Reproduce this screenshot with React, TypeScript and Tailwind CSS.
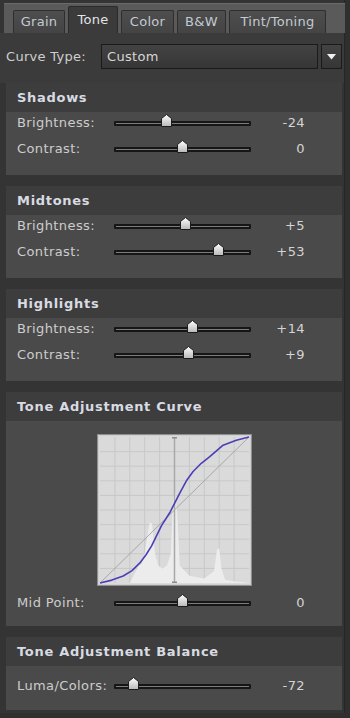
import React from 'react';

type Row = { label: string; value: number };
type Section = { title: string; rows: Row[] };

const SECTIONS: Section[] = [
  { title: 'Shadows', rows: [{ label: 'Brightness:', value: -24 }, { label: 'Contrast:', value: 0 }] },
  { title: 'Midtones', rows: [{ label: 'Brightness:', value: 5 }, { label: 'Contrast:', value: 53 }] },
  { title: 'Highlights', rows: [{ label: 'Brightness:', value: 14 }, { label: 'Contrast:', value: 9 }] },
];

const TABS = [
  { label: 'Grain', w: 'w-[52px]' },
  { label: 'Tone', w: 'w-[50px]', active: true },
  { label: 'Color', w: 'w-[53px]' },
  { label: 'B&W', w: 'w-[49px]' },
  { label: 'Tint/Toning', w: 'w-[97px]' },
];

const fmt = (v: number) => (v > 0 ? `+${v}` : `${v}`);

function Thumb() {
  return (
    <svg width="11" height="13" viewBox="0 0 11 13">
      <defs>
        <linearGradient id="thumbG" x1="0" y1="0" x2="0" y2="1">
          <stop offset="0" stopColor="#ffffff" />
          <stop offset="1" stopColor="#b8b8b8" />
        </linearGradient>
      </defs>
      <path d="M5.5 0.5 L10.5 4.5 L10.5 12.5 L0.5 12.5 L0.5 4.5 Z" fill="url(#thumbG)" stroke="#1c1c1c" strokeWidth="1" />
    </svg>
  );
}

function Slider({ value }: { value: number }) {
  const pct = (value + 100) / 200;
  return (
    <div className="relative w-[137px] h-[5px] shrink-0 rounded-[1px] bg-[#161616] flex items-center">
      <div className="w-full h-[1px] bg-[#7c7c7c] mx-[2px]" />
      <div className="absolute top-[-7px]" style={{ left: pct * 137 - 5.5 }}>
        <Thumb />
      </div>
    </div>
  );
}

function SliderRow({ label, value }: Row) {
  return (
    <div className="flex items-center h-[22px]">
      <span className="w-[97px] shrink-0 text-[13px] tracking-[0.4px] text-[#cdcdcd] whitespace-nowrap">{label}</span>
      <Slider value={value} />
      <span className="w-[54px] text-right text-[13px] tracking-[0.4px] text-[#d4d4d4]">{fmt(value)}</span>
    </div>
  );
}

function Header({ title }: { title: string }) {
  return (
    <div className="h-[29px] bg-[#3d3d3d] flex items-center pl-[11px] text-[13px] font-bold text-[#d8dbe2] tracking-[0.7px]">
      {title}
    </div>
  );
}

// points of the tone curve as fractions of the plot area
const CURVE: [number, number][] = [
  [0.0, 1.0], [0.08, 0.98], [0.156, 0.952], [0.215, 0.915], [0.268, 0.862], [0.31, 0.805], [0.346, 0.745],
  [0.413, 0.607], [0.469, 0.517], [0.536, 0.382], [0.58, 0.3], [0.625, 0.236], [0.68, 0.18],
  [0.737, 0.135], [0.826, 0.056], [0.915, 0.022], [1.0, 0.0],
];

const HIST: [number, number][] = [
  [0.0, 1.0], [0.2, 1.0], [0.23, 0.94], [0.26, 0.88], [0.28, 0.87], [0.3, 0.8], [0.32, 0.66], [0.335, 0.58],
  [0.35, 0.6], [0.37, 0.8], [0.39, 0.88], [0.42, 0.9], [0.45, 0.88], [0.475, 0.8], [0.49, 0.42], [0.505, 0.37],
  [0.52, 0.55], [0.535, 0.88], [0.6, 0.95], [0.7, 0.97], [0.765, 0.92], [0.785, 0.77], [0.8, 0.76], [0.815, 0.9],
  [0.84, 0.98], [1.0, 1.0],
];

function CurveGraph() {
  const x0 = 3, y0 = 3, w = 149, h = 146;
  const pt = ([fx, fy]: [number, number]) => `${(x0 + fx * w).toFixed(1)},${(y0 + fy * h).toFixed(1)}`;
  const lines = [];
  for (let i = 1; i < 10; i++) {
    lines.push(<line key={`v${i}`} x1={x0 + (w * i) / 10} y1={y0} x2={x0 + (w * i) / 10} y2={y0 + h} stroke="#c8c8c8" strokeWidth="1" />);
    lines.push(<line key={`h${i}`} x1={x0} y1={y0 + (h * i) / 10} x2={x0 + w} y2={y0 + (h * i) / 10} stroke="#c8c8c8" strokeWidth="1" />);
  }
  return (
    <svg width="155" height="152" viewBox="0 0 155 152" className="block">
      <rect x="0.5" y="0.5" width="154" height="151" fill="#cfcfcf" stroke="#8f8f8f" />
      <rect x="2" y="2" width="151" height="148" fill="#dadada" />
      {lines}
      <polygon points={HIST.map(pt).join(' ')} fill="#ececec" />
      <line x1={x0} y1={y0 + h} x2={x0 + w} y2={y0} stroke="#9a9a9a" strokeWidth="0.8" />
      <line x1={x0 + w / 2} y1={y0} x2={x0 + w / 2} y2={y0 + h} stroke="#a8a8a8" strokeWidth="1.5" />
      <rect x={x0 + w / 2 - 2.5} y={y0} width="5" height="1.5" fill="#8a8a8a" />
      <rect x={x0 + w / 2 - 2.5} y={y0 + h - 1.5} width="5" height="1.5" fill="#8a8a8a" />
      <polyline points={CURVE.map(pt).join(' ')} fill="none" stroke="#4a3fb6" strokeWidth="1.6" strokeLinejoin="round" />
    </svg>
  );
}

export default function App() {
  return (
    <div className="w-[350px] h-[718px] bg-[#2f2f2f] overflow-hidden" style={{ fontFamily: '"DejaVu Sans", Verdana, sans-serif' }}>
      <div className="w-[345px] h-[713px] bg-[#343434] border-r border-[#262626]">
        {/* Tabs */}
        <div className="pt-[3px] pl-[4px]">
          <div className="w-[341px] h-[30px] bg-[#5a5a5a] border-t border-[#6a6a6a] flex items-end pl-[9px] gap-[3px]">
            {TABS.map((t) => (
              <div
                key={t.label}
                className={`${t.w} flex items-center justify-center text-[13px] tracking-[0.3px] border border-b-0 rounded-t-[2px] ${
                  t.active
                    ? 'h-[27px] bg-[#3b3b3b] border-[#2a2a2a] text-[#e2e4e8]'
                    : 'h-[23px] bg-gradient-to-b from-[#4e4e4e] to-[#444444] border-[#2e2e2e] text-[#c3cad2]'
                }`}
              >
                {t.label}
              </div>
            ))}
          </div>
        </div>

        {/* Curve type */}
        <div className="bg-[#3b3b3b] pl-[6px] pr-[2px] pt-[11px] pb-[14px]">
          <div className="flex items-center h-[25px]">
            <span className="w-[95px] text-[13px] tracking-[0.3px] text-[#cfcfcf]">Curve Type:</span>
            <div className="w-[217px] h-[25px] bg-gradient-to-b from-[#434343] to-[#363636] border border-[#1a1a1a] flex items-center pl-[5px] text-[13px] tracking-[0.3px] text-[#d6d6d6]">
              Custom
            </div>
            <div className="ml-[3px] w-[21px] h-[25px] bg-gradient-to-b from-[#434343] to-[#363636] border border-[#1a1a1a] flex items-center justify-center">
              <svg width="9" height="6" viewBox="0 0 9 6">
                <path d="M0 0 L9 0 L4.5 5.5 Z" fill="#f0f0f0" />
              </svg>
            </div>
          </div>
        </div>

        <div className="pl-[6px] w-[342px] flex flex-col gap-[11px]">
          {SECTIONS.map((s) => (
            <div key={s.title}>
              <Header title={s.title} />
              <div className="bg-[#4a4a4a] pl-[11px] pb-[15px] flex flex-col gap-[4px]">
                {s.rows.map((r) => (
                  <SliderRow key={r.label} {...r} />
                ))}
              </div>
            </div>
          ))}

          <div>
            <Header title="Tone Adjustment Curve" />
            <div className="bg-[#4a4a4a] pl-[11px] pt-[13px] pb-[12px]">
              <div className="pl-[80px]">
                <CurveGraph />
              </div>
              <div className="mt-[6px]">
                <SliderRow label="Mid Point:" value={0} />
              </div>
            </div>
          </div>

          <div>
            <Header title="Tone Adjustment Balance" />
            <div className="bg-[#4a4a4a] pl-[11px] pt-[9px] pb-[13px]">
              <SliderRow label="Luma/Colors:" value={-72} />
            </div>
          </div>
        </div>
      </div>
    </div>
  );
}
